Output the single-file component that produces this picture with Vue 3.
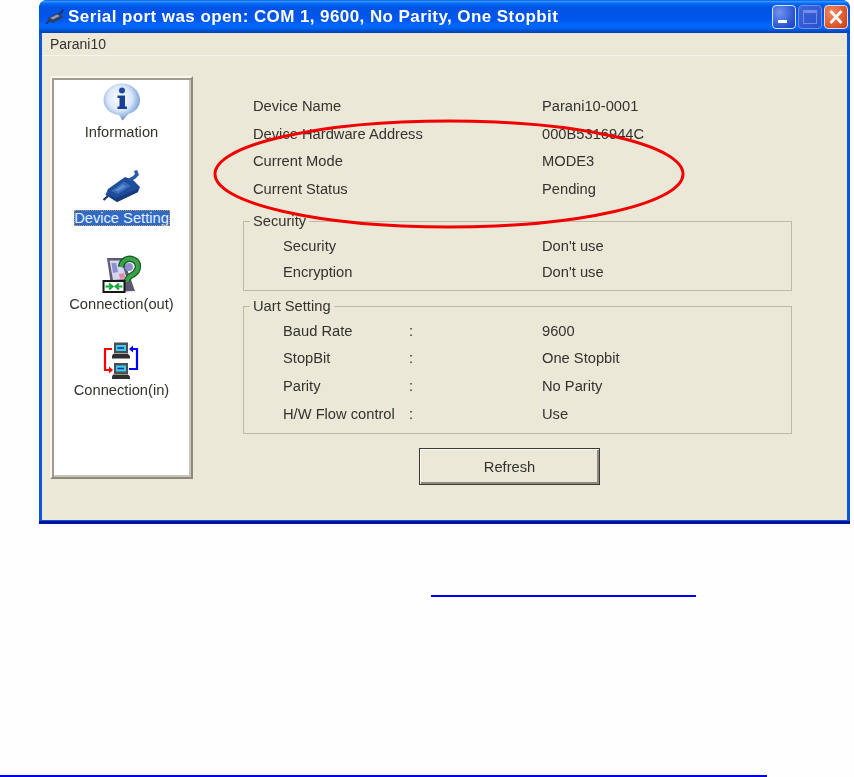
<script setup>
const info = [
  ['Device Name', 'Parani10-0001'],
  ['Device Hardware Address', '000B5316944C'],
  ['Current Mode', 'MODE3'],
  ['Current Status', 'Pending'],
]
const security = [
  ['Security', '', "Don't use"],
  ['Encryption', '', "Don't use"],
]
const uart = [
  ['Baud Rate', ':', '9600'],
  ['StopBit', ':', 'One Stopbit'],
  ['Parity', ':', 'No Parity'],
  ['H/W Flow control', ':', 'Use'],
]
</script>

<template>
  <div class="page">
    <div class="window">
      <div class="titlebar">
        <svg class="plug" viewBox="0 0 20 16" width="20" height="16">
          <path d="M1 15 L4 12" stroke="#1c2a48" stroke-width="1.5" />
          <path d="M3 9 L12 4 L18 7 L17 9 L8 14 L3 12 Z" fill="#2f3f62" />
          <path d="M5 9 L12 5.5 L15 7 L8 10.5 Z" fill="#8d9bb8" />
          <path d="M14 5 L17 3 L18 0.5" stroke="#1c2a48" stroke-width="1.6" fill="none" />
        </svg>
        <span class="title">Serial port was open: COM 1, 9600, No Parity, One Stopbit</span>
        <div class="controls">
          <div class="ctl min"><i></i></div>
          <div class="ctl max"><i></i></div>
          <div class="ctl close">
            <svg viewBox="0 0 24 24" width="24" height="24">
              <path d="M6.5 6 L17.5 18 M17.5 6 L6.5 18" stroke="#fff" stroke-width="2.6" />
            </svg>
          </div>
        </div>
      </div>

      <div class="client">
        <div class="menubar"><span>Parani10</span></div>
        <div class="body">
          <div class="side">
            <div class="item">
              <svg viewBox="0 0 40 40" width="40" height="40">
                <defs>
                  <radialGradient id="bub" cx="45%" cy="40%" r="60%">
                    <stop offset="0" stop-color="#ffffff" />
                    <stop offset="0.55" stop-color="#dce8f8" />
                    <stop offset="0.85" stop-color="#8fb2e0" />
                    <stop offset="1" stop-color="#5f7fb0" />
                  </radialGradient>
                </defs>
                <path d="M20 0.5 C30 0.5 38 8 38 17 C38 24 33 29 26.5 31 L20.5 37.5 L17 32 C8 31 1.5 25 1.5 17 C1.5 8 10 0.5 20 0.5 Z" fill="url(#bub)" />
                <circle cx="20" cy="7.5" r="3" fill="#1f4aa0" />
                <path d="M15.5 12.5 H23 V23.5 H25 V26 H15.5 V23.5 H17.5 V15 H15.5 Z" fill="#1a3f90" />
              </svg>
              <span class="lbl">Information</span>
            </div>
            <div class="item">
              <svg viewBox="0 0 40 40" width="40" height="40">
                <path d="M1.5 31 L6 27" stroke="#14306a" stroke-width="2.2" />
                <path d="M3.5 26 L6 20 L23 8 L31 11 L38 18 L36 23 L15 33 Z" fill="#1f4d9c" />
                <path d="M9 22 L22 12.5 L29 17 L16 25 Z" fill="#3a6cbc" />
                <path d="M13 21 L21 15.5 L24 17.5 L16 22.5 Z" fill="#5f8ad0" />
                <path d="M15 33 L36 23 L36 20 L14 29 L4 25 Z" fill="#163a7a" />
                <path d="M27 11 L32 8.5 L35 5.5 L33.5 1.5" stroke="#2a5aa8" stroke-width="3.4" fill="none" />
              </svg>
              <span class="lbl selected">Device Setting</span>
            </div>
            <div class="item">
              <svg viewBox="0 0 40 40" width="40" height="40">
                <path d="M5 3 L21 3 L33 36 L10 37 Z" fill="#5c5a6e" />
                <path d="M7.5 5.5 L19 5.5 L25 24 L11 25 Z" fill="#d5d5ef" />
                <path d="M9.5 8 L14 8 L16 17 L11 18 Z" fill="#8d8fce" />
                <path d="M17 19 L22 18 L23 23 L18 24 Z" fill="#e08aa0" />
                <circle cx="27" cy="12" r="4" fill="#8d8fce" />
                <path d="M19 12 C20 5 26 2.5 31 4.5 C38 7 37 16 31 19.5 C27 21.5 25 23 25 27" stroke="#15542a" stroke-width="6.4" fill="none" />
                <path d="M19 12 C20 5 26 2.5 31 4.5 C38 7 37 16 31 19.5 C27 21.5 25 23 25 27" stroke="#3aa344" stroke-width="4" fill="none" />
                <rect x="1.5" y="26" width="21" height="11" fill="#fff" stroke="#161616" stroke-width="2" />
                <path d="M3.5 31.5 H10 M7 28.5 L10.5 31.5 L7 34.5 M20.5 31.5 H14 M17 28.5 L13.5 31.5 L17 34.5" stroke="#12a83a" stroke-width="2" fill="none" />
              </svg>
              <span class="lbl">Connection(out)</span>
            </div>
            <div class="item">
              <svg viewBox="0 0 40 40" width="40" height="40">
                <path d="M12 1.5 H26 V12.5 H12 Z" fill="#4e4e4e" />
                <rect x="14" y="4" width="10" height="6" fill="#3ccdf2" />
                <path d="M15.5 7 H22" stroke="#1030a0" stroke-width="1.6" />
                <path d="M11 13 H26 L28 15 V17.5 H10 V15 Z" fill="#2f2f2f" />
                <path d="M12 22 H26 V33 H12 Z" fill="#4e4e4e" />
                <rect x="14" y="24.5" width="10" height="6" fill="#3ccdf2" />
                <path d="M15.5 27.5 H22" stroke="#1030a0" stroke-width="1.6" />
                <path d="M11 33.5 H26 L28 35.5 V38 H10 V35.5 Z" fill="#2f2f2f" />
                <path d="M10 8 H3 V29 H8" stroke="#ff0000" stroke-width="2.2" fill="none" />
                <path d="M7 25.5 L11 29 L7 32.5 Z" fill="#ff0000" />
                <path d="M27 28 H35 V8 H30" stroke="#0000ff" stroke-width="2.2" fill="none" />
                <path d="M31 4.5 L27 8 L31 11.5 Z" fill="#0000ff" />
              </svg>
              <span class="lbl">Connection(in)</span>
            </div>
          </div>

          <div class="content">
            <div class="summary">
              <div v-for="r in info" :key="r[0]" class="row top">
                <span>{{ r[0] }}</span>
                <span>{{ r[1] }}</span>
              </div>
            </div>
            <div class="group sec">
              <span class="legend">Security</span>
              <div v-for="r in security" :key="r[0]" class="row in">
                <span>{{ r[0] }}</span>
                <span>{{ r[1] }}</span>
                <span>{{ r[2] }}</span>
              </div>
            </div>
            <div class="group uart">
              <span class="legend">Uart Setting</span>
              <div v-for="r in uart" :key="r[0]" class="row in">
                <span>{{ r[0] }}</span>
                <span>{{ r[1] }}</span>
                <span>{{ r[2] }}</span>
              </div>
            </div>
            <button class="refresh">Refresh</button>
          </div>
        </div>
      </div>
    </div>

    <div class="rule one"></div>
    <div class="rule two"></div>

    <svg class="oval" viewBox="0 0 480 120" width="480" height="120">
      <ellipse cx="240" cy="60" rx="234" ry="53" fill="none" stroke="#f00000" stroke-width="3" />
    </svg>
  </div>
</template>

<style>
html, body { margin: 0; background: #fefefe; }
</style>

<style scoped>
.page {
  position: relative;
  width: 854px;
  height: 777px;
  overflow: hidden;
  font-family: "Liberation Sans", Arial, sans-serif;
  font-size: 14.7px;
  color: #33332e;
  background: #fefefe;
}
.window {
  box-sizing: border-box;
  width: 811px;
  height: 524px;
  margin-left: 39px;
  display: flex;
  flex-direction: column;
  border-radius: 8px 8px 0 0;
  background: #0a55e0;
  border-bottom: 3px solid #00129a;
  overflow: hidden;
  filter: blur(0.3px);
}
.titlebar {
  height: 33px;
  flex: none;
  display: flex;
  align-items: center;
  padding: 0 2px 0 6px;
  background: linear-gradient(#0058ee 0%, #3593ff 4%, #288eff 6%, #127dff 8%, #036ffc 10%, #0262ee 14%, #0057e5 20%, #0054e3 24%, #0055eb 56%, #005bf5 66%, #026afe 76%, #0062ef 86%, #0052d6 92%, #0040ab 100%);
}
.plug { flex: none; margin-top: 1px; }
.title {
  margin-left: 3px;
  color: #fff;
  font-weight: 700;
  font-size: 17px;
  letter-spacing: 0.42px;
  white-space: nowrap;
}
.controls {
  margin-left: auto;
  display: flex;
  gap: 2px;
  margin-top: 1px;
}
.ctl {
  box-sizing: border-box;
  width: 24px;
  height: 24px;
  border-radius: 4px;
  border: 1px solid #d8e4fa;
  position: relative;
  background: radial-gradient(circle at 30% 30%, #6f94ee, #2a52d0 70%, #1d3db4);
}
.ctl.min i {
  position: absolute;
  left: 5px;
  bottom: 5px;
  width: 9px;
  height: 3px;
  background: #fff;
}
.ctl.max {
  border-color: #6d8fe0;
  background: linear-gradient(135deg, #3d66dc, #2b50cc);
}
.ctl.max i {
  position: absolute;
  left: 4px;
  top: 4px;
  box-sizing: border-box;
  width: 14px;
  height: 14px;
  border: 1px solid #6f90e6;
  border-top-width: 3px;
}
.ctl.close {
  background: radial-gradient(circle at 30% 30%, #ee8a60, #dc5a30 60%, #c03a18);
  border-color: #f0d8d0;
}
.ctl.close svg { position: absolute; left: -1px; top: -1px; }
.client {
  flex: 1;
  margin: 0 3px 1px;
  display: flex;
  flex-direction: column;
  background: #ebe8d8;
}
.menubar {
  box-sizing: border-box;
  height: 23px;
  flex: none;
  display: flex;
  align-items: center;
  padding-left: 8px;
  font-size: 14px;
  border-bottom: 1px solid #f6f4ea;
}
.body { flex: 1; display: flex; }
.side {
  box-sizing: border-box;
  flex: none;
  width: 143px;
  height: 403px;
  margin: 20px 0 0 8px;
  padding-top: 5px;
  background: #fff;
  border: 2px solid;
  border-color: #f7f5ec #8e8b7e #8e8b7e #f7f5ec;
  box-shadow: inset 2px 2px 0 #a09d8f, inset -2px -2px 0 #c8c6ba;
}
.item {
  height: 86px;
  display: flex;
  flex-direction: column;
  align-items: center;
}
.item svg { flex: none; }
.lbl {
  height: 16px;
  margin-top: 1px;
  line-height: 16px;
  white-space: nowrap;
}
.lbl.selected {
  box-sizing: border-box;
  width: 96px;
  text-align: center;
  color: #e6eefc;
  background: #316ac5;
  outline: 1px dotted #b89a60;
  outline-offset: -1px;
}
.content {
  width: 549px;
  margin-left: 50px;
  padding-top: 36.5px;
}
.row { display: grid; align-items: center; white-space: nowrap; }
.row.top {
  height: 27.5px;
  grid-template-columns: 289px 1fr;
  padding-left: 10px;
}
.group {
  position: relative;
  box-sizing: border-box;
  border: 1px solid #bdbaa8;
  padding-left: 39px;
}
.legend {
  position: absolute;
  left: 6px;
  top: -8px;
  padding: 0 3px;
  line-height: 15px;
  background: #ebe8d8;
}
.row.in { grid-template-columns: 126px 133px 1fr; }
.sec { margin-top: 18.5px; height: 70px; padding-top: 11px; }
.sec .row { height: 26px; }
.uart { margin-top: 15px; height: 128px; padding-top: 10px; }
.uart .row { height: 27.6px; }
.refresh {
  display: block;
  box-sizing: border-box;
  width: 181px;
  height: 37px;
  margin: 14px 0 0 176px;
  padding: 0;
  font: inherit;
  color: inherit;
  background: #ebe8d8;
  border: 1px solid #3a3a36;
  box-shadow: inset 1px 1px 0 #fbfaf4, inset -2px -2px 0 #8e8b7c;
}
.rule { height: 2px; background: #0000f0; }
.rule.one { width: 265px; margin: 71px 0 0 431px; }
.rule.two { width: 767px; margin-top: 178px; }
.oval {
  position: absolute;
  left: 209px;
  top: 114px;
  pointer-events: none;
}
</style>
